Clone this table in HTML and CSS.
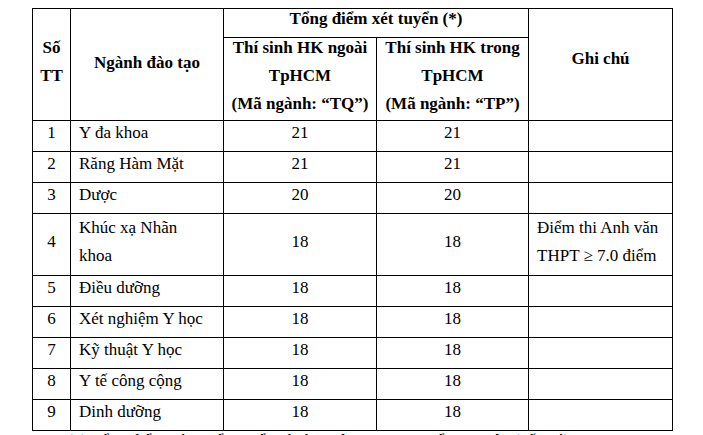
FILE: index.html
```html
<!DOCTYPE html>
<html lang="vi">
<head>
<meta charset="utf-8">
<link rel="stylesheet" href="styles.css">
</head>
<body>
<div class="page">
<table class="scores">
  <colgroup>
    <col class="c-stt">
    <col class="c-name">
    <col class="c-out">
    <col class="c-in">
    <col class="c-note">
  </colgroup>
  <thead>
    <tr class="h1">
      <th rowspan="2" class="stt">Số<br>TT</th>
      <th rowspan="2" class="name">Ngành đào tạo</th>
      <th colspan="2" class="group">Tổng điểm xét tuyển (*)</th>
      <th rowspan="2" class="note">Ghi chú</th>
    </tr>
    <tr class="h2">
      <th><div class="sub">Thí sinh HK ngoài<br>TpHCM<br>(Mã ngành: “TQ”)</div></th>
      <th><div class="sub">Thí sinh HK trong<br>TpHCM<br>(Mã ngành: “TP”)</div></th>
    </tr>
  </thead>
  <tbody>
    <tr><td class="n">1</td><td>Y đa khoa</td><td class="n">21</td><td class="n">21</td><td></td></tr>
    <tr><td class="n">2</td><td>Răng Hàm Mặt</td><td class="n">21</td><td class="n">21</td><td></td></tr>
    <tr><td class="n">3</td><td>Dược</td><td class="n">20</td><td class="n">20</td><td></td></tr>
    <tr class="double"><td class="n">4</td><td>Khúc xạ Nhãn<br>khoa</td><td class="n">18</td><td class="n">18</td><td>Điểm thi Anh văn<br>THPT ≥ 7.0 điểm</td></tr>
    <tr><td class="n">5</td><td>Điều dưỡng</td><td class="n">18</td><td class="n">18</td><td></td></tr>
    <tr><td class="n">6</td><td>Xét nghiệm Y học</td><td class="n">18</td><td class="n">18</td><td></td></tr>
    <tr><td class="n">7</td><td>Kỹ thuật Y học</td><td class="n">18</td><td class="n">18</td><td></td></tr>
    <tr><td class="n">8</td><td>Y tế công cộng</td><td class="n">18</td><td class="n">18</td><td></td></tr>
    <tr><td class="n">9</td><td>Dinh dưỡng</td><td class="n">18</td><td class="n">18</td><td></td></tr>
  </tbody>
</table>
<p class="footnote">(*) Tổng điểm xét tuyển: Điểm thi ba môn THPT + Điểm ưu tiên (nếu có)</p>
</div>
</body>
</html>
```

FILE: styles.css
```css
html, body {
  margin: 0;
  padding: 0;
  background: #ffffff;
}
body {
  font-family: "Liberation Serif", "Times New Roman", serif;
  color: #000000;
  font-size: 17px;
}
.page {
  padding: 8px 0 0 32px;
}
.scores {
  border-collapse: collapse;
  table-layout: fixed;
  width: 640px;
}
.c-stt { width: 38px; }
.c-name { width: 153px; }
.c-out { width: 153px; }
.c-in { width: 152px; }
.c-note { width: 144px; }
.scores th,
.scores td {
  border: 1.5px solid #000;
  padding: 0 8px;
  vertical-align: middle;
  font-family: "Liberation Serif", "Times New Roman", serif;
}
.scores th {
  font-weight: bold;
  text-align: center;
  line-height: 28px;
}
.scores th.stt {
  padding: 0 0 6px;
}
.scores th.name {
  padding: 0 4px 4px;
}
.scores th.note {
  padding: 0 4px 12px;
}
.h1 th.group {
  line-height: 20px;
  padding: 0 0 8px;
}
.h2 th {
  padding: 0 2px 2px;
  vertical-align: top;
}
.sub {
  margin-top: -4px;
  line-height: 28px;
}
.scores td {
  text-align: left;
  line-height: 24px;
  padding-bottom: 6px;
}
.scores td.n {
  text-align: center;
}
.scores tr.double td {
  line-height: 27.5px;
  padding-bottom: 6px;
}
.footnote {
  margin: 0;
  padding: 0 0 0 35px;
  line-height: 20px;
}
```
